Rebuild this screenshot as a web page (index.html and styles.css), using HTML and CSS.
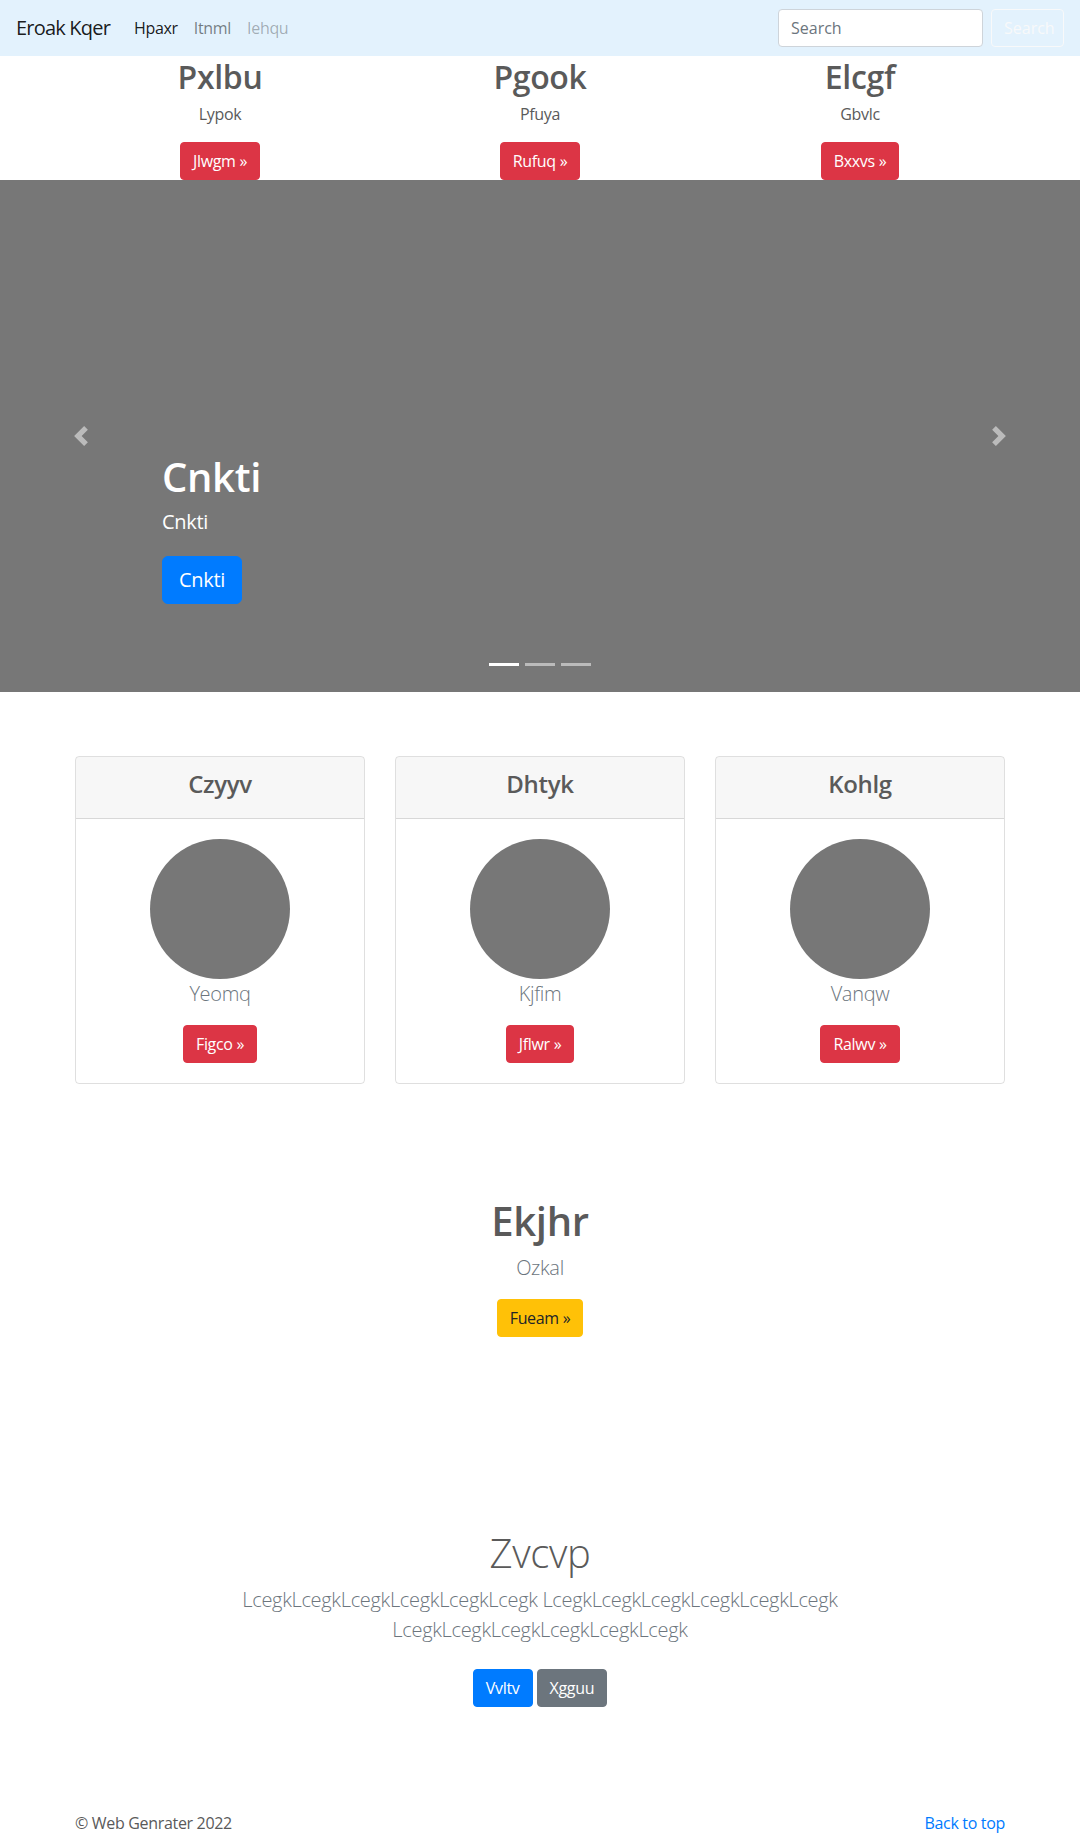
FILE: index.html
```html
<!DOCTYPE html>
<html lang="en">
<head>
<meta charset="utf-8">
<title>Eroak Kqer</title>
<link rel="stylesheet" href="styles.css">
</head>
<body>
<nav class="navbar">
  <a class="brand" href="#">Eroak Kqer</a>
  <ul class="nav">
    <li><a class="nav-link active" href="#">Hpaxr</a></li>
    <li><a class="nav-link" href="#">Itnml</a></li>
    <li><a class="nav-link disabled" href="#">Iehqu</a></li>
  </ul>
  <form class="search">
    <input class="search-input" type="search" placeholder="Search">
    <button class="btn btn-outline-light" type="button">Search</button>
  </form>
</nav>

<section class="container row3 marketing">
  <div class="col">
    <h2>Pxlbu</h2>
    <p>Lypok</p>
    <a class="btn btn-danger" href="#">Jlwgm &raquo;</a>
  </div>
  <div class="col">
    <h2>Pgook</h2>
    <p>Pfuya</p>
    <a class="btn btn-danger" href="#">Rufuq &raquo;</a>
  </div>
  <div class="col">
    <h2>Elcgf</h2>
    <p>Gbvlc</p>
    <a class="btn btn-danger" href="#">Bxxvs &raquo;</a>
  </div>
</section>

<div class="carousel">
  <ol class="indicators">
    <li class="active"></li>
    <li></li>
    <li></li>
  </ol>
  <div class="caption">
    <h1>Cnkti</h1>
    <p>Cnkti</p>
    <div class="caption-action"><a class="btn btn-lg btn-primary" href="#">Cnkti</a></div>
  </div>
  <a class="control control-prev" href="#">
    <svg width="20" height="20" viewBox="0 0 8 8"><path d="M5.25 0l-4 4 4 4 1.5-1.5L4.25 4l2.5-2.5L5.25 0z" fill="#fff"/></svg>
  </a>
  <a class="control control-next" href="#">
    <svg width="20" height="20" viewBox="0 0 8 8"><path d="M2.75 0l-1.5 1.5L3.75 4l-2.5 2.5L2.75 8l4-4-4-4z" fill="#fff"/></svg>
  </a>
</div>

<section class="container row3 cards">
  <div class="col">
    <div class="card">
      <div class="card-header"><h4>Czyyv</h4></div>
      <div class="card-body">
        <svg class="avatar" width="140" height="140" viewBox="0 0 140 140"><circle cx="70" cy="70" r="70" fill="#777"/></svg>
        <p class="lead">Yeomq</p>
        <a class="btn btn-danger" href="#">Figco &raquo;</a>
      </div>
    </div>
  </div>
  <div class="col">
    <div class="card">
      <div class="card-header"><h4>Dhtyk</h4></div>
      <div class="card-body">
        <svg class="avatar" width="140" height="140" viewBox="0 0 140 140"><circle cx="70" cy="70" r="70" fill="#777"/></svg>
        <p class="lead">Kjfim</p>
        <a class="btn btn-danger" href="#">Jflwr &raquo;</a>
      </div>
    </div>
  </div>
  <div class="col">
    <div class="card">
      <div class="card-header"><h4>Kohlg</h4></div>
      <div class="card-body">
        <svg class="avatar" width="140" height="140" viewBox="0 0 140 140"><circle cx="70" cy="70" r="70" fill="#777"/></svg>
        <p class="lead">Vanqw</p>
        <a class="btn btn-danger" href="#">Ralwv &raquo;</a>
      </div>
    </div>
  </div>
</section>

<section class="container cta">
  <h1>Ekjhr</h1>
  <p class="lead">Ozkal</p>
  <a class="btn btn-warning" href="#">Fueam &raquo;</a>
</section>

<section class="container jumbo">
  <h1>Zvcvp</h1>
  <p class="lead">LcegkLcegkLcegkLcegkLcegkLcegk LcegkLcegkLcegkLcegkLcegkLcegk LcegkLcegkLcegkLcegkLcegkLcegk</p>
  <div class="jumbo-actions">
    <a class="btn btn-primary" href="#">Vvltv</a>
    <a class="btn btn-secondary" href="#">Xgguu</a>
  </div>
</section>

<footer class="container footer">
  <p>&copy; Web Genrater 2022</p>
  <p><a href="#">Back to top</a></p>
</footer>
</body>
</html>
```

FILE: styles.css
```css
* { box-sizing: border-box; }

body {
  margin: 0;
  font-family: "Open Sans", "Noto Sans", sans-serif;
  font-size: 16px;
  line-height: 1.5;
  color: #5a5a5a;
  background: #fff;
  letter-spacing: -0.02em;
}

a { text-decoration: none; }

/* Navbar */
.navbar {
  display: flex;
  align-items: center;
  height: 56px;
  padding: 8px 16px;
  background: #e3f2fd;
}
.brand {
  font-size: 20px;
  line-height: 30px;
  margin-right: 16px;
  letter-spacing: -0.04em;
  color: rgba(0, 0, 0, .9);
}
.nav {
  display: flex;
  flex: 1;
  list-style: none;
  margin: 0;
  padding: 0;
}
.nav-link {
  display: block;
  padding: 8px;
  line-height: 24px;
  color: rgba(0, 0, 0, .5);
}
.nav-link.active { color: rgba(0, 0, 0, .9); }
.nav-link.disabled { color: rgba(0, 0, 0, .3); }

.search { display: flex; align-items: center; margin: 0; }
.search-input {
  width: 205px;
  height: 38px;
  margin-right: 8px;
  padding: 6px 12px;
  font: inherit;
  font-size: 16px;
  color: #495057;
  background: #fff;
  border: 1px solid #ced4da;
  border-radius: 4px;
}
.search-input::placeholder { color: #6c757d; }

/* Buttons */
.btn {
  display: inline-block;
  font-family: inherit;
  font-size: 16px;
  line-height: 24px;
  padding: 6px 12px;
  border: 1px solid transparent;
  border-radius: 4px;
  text-align: center;
  cursor: pointer;
}
.btn-lg {
  font-size: 20px;
  line-height: 30px;
  padding: 8px 16px;
  border-radius: 6px;
}
.btn-danger { background: #dc3545; border-color: #dc3545; color: #fff; }
.btn-primary { background: #007bff; border-color: #007bff; color: #fff; }
.btn-secondary { background: #6c757d; border-color: #6c757d; color: #fff; }
.btn-warning { background: #ffc107; border-color: #ffc107; color: #212529; }
.btn-outline-light {
  background: transparent;
  border-color: #f8f9fa;
  color: #f8f9fa;
  width: 73px;
  height: 38px;
}

/* Layout */
.container {
  width: 960px;
  margin: 0 auto;
}
.row3 {
  display: grid;
  grid-template-columns: repeat(3, 1fr);
}
.col {
  padding: 0 15px;
  display: flex;
  flex-direction: column;
  align-items: center;
  text-align: center;
}

/* Marketing */
.marketing h2 {
  margin: 0 0 6px;
  padding-top: 2px;
  font-size: 32px;
  line-height: 38.4px;
  font-weight: 600;
}
.marketing p {
  margin: 0 0 16px;
}

/* Carousel */
.carousel {
  position: relative;
  height: 512px;
  background: #777;
  margin-bottom: 64px;
  overflow: hidden;
}
.indicators {
  position: absolute;
  left: 0;
  right: 0;
  bottom: 26px;
  display: flex;
  justify-content: center;
  gap: 6px;
  list-style: none;
  margin: 0;
  padding: 0;
}
.indicators li {
  width: 30px;
  height: 3px;
  background: #fff;
  opacity: .5;
}
.indicators li.active { opacity: 1; }

.caption {
  position: absolute;
  left: 15%;
  right: 15%;
  bottom: 48px;
  padding: 20px 0;
  color: #fff;
  text-align: left;
  z-index: 2;
}
.caption h1 {
  margin: 0 0 7px;
  padding-top: 1px;
  font-size: 40px;
  line-height: 48px;
  font-weight: 600;
}
.caption p {
  margin: 0 0 20px;
  font-size: 20px;
  line-height: 28px;
}
.caption-action { margin-bottom: 20px; }

.control {
  position: absolute;
  top: 0;
  bottom: 0;
  width: 15%;
  display: flex;
  align-items: center;
  justify-content: center;
  opacity: .5;
  z-index: 1;
}
.control-prev { left: 0; }
.control-next { right: 0; }
.control svg { display: block; }

/* Cards */
.card {
  width: 100%;
  border: 1px solid rgba(0, 0, 0, .125);
  border-radius: 4px;
  overflow: hidden;
}
.card-header {
  padding: 12px 20px;
  background: rgba(0, 0, 0, .03);
  border-bottom: 1px solid rgba(0, 0, 0, .125);
}
.card-header h4 {
  margin: 0 0 7px;
  padding-top: 1px;
  font-size: 24px;
  line-height: 28.8px;
  font-weight: 600;
}
.card-body {
  padding: 20px;
  display: flex;
  flex-direction: column;
  align-items: center;
}
.avatar { display: block; }

.lead {
  font-size: 20px;
  line-height: 30px;
  font-weight: 300;
  color: #6c757d;
  margin: 0 0 16px;
}

/* CTA */
.cta {
  padding-top: 113px;
  display: flex;
  flex-direction: column;
  align-items: center;
  text-align: center;
}
.cta h1 {
  margin: 0 0 8px;
  font-size: 40px;
  line-height: 48px;
  font-weight: 600;
}

/* Jumbo */
.jumbo {
  padding-top: 192px;
  display: flex;
  flex-direction: column;
  align-items: center;
  text-align: center;
}
.jumbo h1 {
  margin: 0 0 8px;
  font-size: 40px;
  line-height: 48px;
  font-weight: 300;
}
.jumbo .lead {
  max-width: 700px;
}
.jumbo-actions {
  display: flex;
  gap: 4px;
  margin-top: 8px;
}

/* Footer */
.footer {
  display: flex;
  justify-content: space-between;
  padding: 104px 15px 48px;
}
.footer p { margin: 0; }
.footer a { color: #007bff; }
```
